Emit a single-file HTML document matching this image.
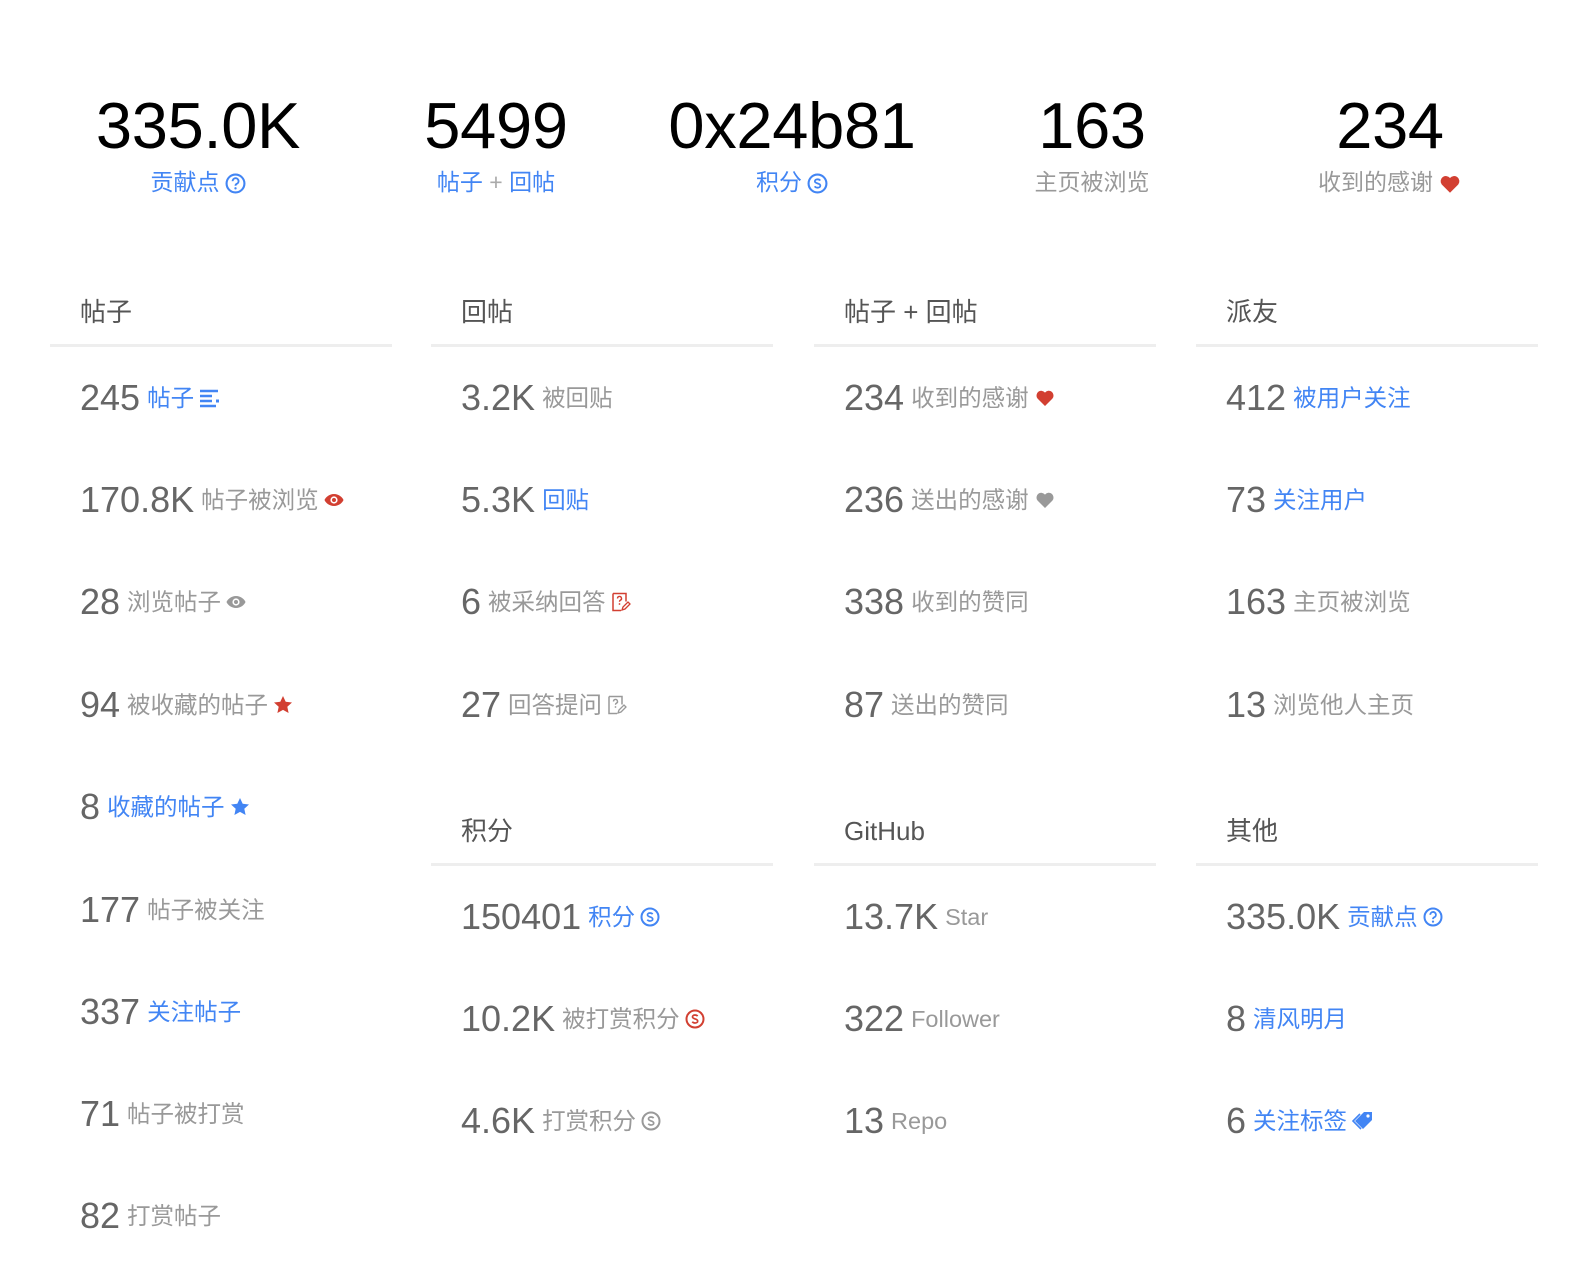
<!DOCTYPE html>
<html><head><meta charset="utf-8"><style>
body{margin:0;width:1594px;height:1288px;background:#fff;position:relative;overflow:hidden;font-family:"Liberation Sans","Noto Sans CJK SC",sans-serif}
.top{position:absolute;top:90px;width:298px;text-align:center}
.top .n{font-size:65px;color:#000;line-height:72px;letter-spacing:-0.3px}
.top .l{font-size:23px;line-height:36px;color:#999;margin-top:2px}
.b{color:#4285f4}.g{color:#999}.r{color:#d23f31}
.top .l.b{color:#4285f4}
.h{position:absolute;width:342px;height:40px;border-bottom:3px solid #eee;font-size:26px;color:#555;}
.h span{position:absolute;left:30px;top:-10px;line-height:36px}
.row{position:absolute;height:40px;line-height:40px;white-space:nowrap}
.row .n{font-size:36px;color:#666;vertical-align:middle}
.row .l{font-size:23.5px;color:#999;vertical-align:middle;margin-left:7px}
.row .l.b{color:#4285f4}
svg{vertical-align:middle;margin-left:5px}
</style></head><body>
<svg width="0" height="0" style="position:absolute">
<defs>
<symbol id="q" viewBox="0 0 20 20"><circle cx="10" cy="10" r="8.5" fill="none" stroke="currentColor" stroke-width="2"/><path d="M7.3 7.8a2.8 2.8 0 1 1 3.9 2.5c-.8.4-1.2.9-1.2 1.8" fill="none" stroke="currentColor" stroke-width="1.8"/><circle cx="10" cy="14.6" r="1.1" fill="currentColor"/></symbol>
<symbol id="s" viewBox="0 0 20 20"><circle cx="10" cy="10" r="8.5" fill="none" stroke="currentColor" stroke-width="2"/><path d="M12.6 7.2c-.5-.8-1.5-1.2-2.6-1.2-1.5 0-2.5.8-2.5 1.9 0 2.6 5.2 1.4 5.2 4.2 0 1.1-1.1 1.9-2.7 1.9-1.2 0-2.2-.5-2.7-1.3" fill="none" stroke="currentColor" stroke-width="1.7"/></symbol>
<symbol id="heart" viewBox="0 0 20 20"><path d="M10 18 2.5 10.5A4.6 4.6 0 0 1 10 4.6a4.6 4.6 0 0 1 7.5 5.9z" fill="currentColor"/></symbol>
<symbol id="eye" viewBox="0 0 20 14"><path d="M10 1C5 1 1.5 4.5 0.5 7c1 2.5 4.5 6 9.5 6s8.5-3.5 9.5-6C18.5 4.5 15 1 10 1z" fill="currentColor"/><circle cx="10" cy="7" r="3.6" fill="#fff"/><circle cx="10" cy="7" r="2" fill="currentColor"/></symbol>
<symbol id="star" viewBox="0 0 20 20"><path d="M10 1l2.7 5.8 6.3.7-4.7 4.3 1.3 6.2L10 14.9 4.4 18l1.3-6.2L1 7.5l6.3-.7z" fill="currentColor"/></symbol>
<symbol id="list" viewBox="0 0 22 20"><path d="M1 3h18M1 8h12M1 13h12M1 18h16" stroke="currentColor" stroke-width="2.4"/><rect x="17" y="11.5" width="3" height="3" fill="currentColor"/></symbol>
<symbol id="doc" viewBox="0 0 20 20"><path d="M2 1.5h13v8M2 1.5v17h8" fill="none" stroke="currentColor" stroke-width="1.5"/><path d="M6.5 6.5a2 2 0 1 1 2.8 1.8c-.6.3-.8.7-.8 1.4" fill="none" stroke="currentColor" stroke-width="1.4"/><circle cx="8.5" cy="12" r=".9" fill="currentColor"/><path d="M11 18l1-3 5-5 2 2-5 5z" fill="none" stroke="currentColor" stroke-width="1.3"/></symbol>
<symbol id="tag" viewBox="0 0 22 20"><path d="M12 1h8v8l-9 9-8-8z" fill="currentColor"/><circle cx="16" cy="5" r="1.6" fill="#fff"/><path d="M8 3 1 10l8 8" fill="none" stroke="currentColor" stroke-width="1.6"/></symbol>
</defs></svg>

<div class="top" style="left:49px"><div class="n">335.0K</div><div class="l b">贡献点<svg width="21" height="21" style="color:#4285f4"><use href="#q"/></svg></div></div>
<div class="top" style="left:347px"><div class="n">5499</div><div class="l"><span class="b">帖子</span> <span style="color:#aaa">+</span> <span class="b">回帖</span></div></div>
<div class="top" style="left:643px"><div class="n">0x24b81</div><div class="l b">积分<svg width="21" height="21" style="color:#4285f4"><use href="#s"/></svg></div></div>
<div class="top" style="left:943px"><div class="n">163</div><div class="l">主页被浏览</div></div>
<div class="top" style="left:1241px"><div class="n">234</div><div class="l">收到的感谢<svg width="24" height="22" style="color:#d23f31"><use href="#heart"/></svg></div></div>

<div class="h" style="left:50px;top:304px"><span>帖子</span></div>
<div class="h" style="left:431px;top:304px"><span>回帖</span></div>
<div class="h" style="left:814px;top:304px"><span>帖子 + 回帖</span></div>
<div class="h" style="left:1196px;top:304px"><span>派友</span></div>
<div class="h" style="left:431px;top:823px"><span>积分</span></div>
<div class="h" style="left:814px;top:823px"><span>GitHub</span></div>
<div class="h" style="left:1196px;top:823px"><span>其他</span></div>

<!-- col1 -->
<div class="row" style="left:80px;top:378px"><span class="n">245</span><span class="l b">帖子</span><svg width="22" height="20" style="color:#4285f4"><use href="#list"/></svg></div>
<div class="row" style="left:80px;top:480px"><span class="n">170.8K</span><span class="l">帖子被浏览</span><svg width="20" height="14" style="color:#d23f31"><use href="#eye"/></svg></div>
<div class="row" style="left:80px;top:582px"><span class="n">28</span><span class="l">浏览帖子</span><svg width="20" height="14" style="color:#999"><use href="#eye"/></svg></div>
<div class="row" style="left:80px;top:685px"><span class="n">94</span><span class="l">被收藏的帖子</span><svg width="20" height="20" style="color:#d23f31"><use href="#star"/></svg></div>
<div class="row" style="left:80px;top:787px"><span class="n">8</span><span class="l b">收藏的帖子</span><svg width="20" height="20" style="color:#4285f4"><use href="#star"/></svg></div>
<div class="row" style="left:80px;top:890px"><span class="n">177</span><span class="l">帖子被关注</span></div>
<div class="row" style="left:80px;top:992px"><span class="n">337</span><span class="l b">关注帖子</span></div>
<div class="row" style="left:80px;top:1094px"><span class="n">71</span><span class="l">帖子被打赏</span></div>
<div class="row" style="left:80px;top:1196px"><span class="n">82</span><span class="l">打赏帖子</span></div>
<!-- col2 -->
<div class="row" style="left:461px;top:378px"><span class="n">3.2K</span><span class="l">被回贴</span></div>
<div class="row" style="left:461px;top:480px"><span class="n">5.3K</span><span class="l b">回贴</span></div>
<div class="row" style="left:461px;top:582px"><span class="n">6</span><span class="l">被采纳回答</span><svg width="20" height="20" style="color:#d23f31"><use href="#doc"/></svg></div>
<div class="row" style="left:461px;top:685px"><span class="n">27</span><span class="l">回答提问</span><svg width="20" height="20" style="color:#999"><use href="#doc"/></svg></div>
<div class="row" style="left:461px;top:897px"><span class="n">150401</span><span class="l b">积分</span><svg width="20" height="20" style="color:#4285f4"><use href="#s"/></svg></div>
<div class="row" style="left:461px;top:999px"><span class="n">10.2K</span><span class="l">被打赏积分</span><svg width="20" height="20" style="color:#d23f31"><use href="#s"/></svg></div>
<div class="row" style="left:461px;top:1101px"><span class="n">4.6K</span><span class="l">打赏积分</span><svg width="20" height="20" style="color:#999"><use href="#s"/></svg></div>
<!-- col3 -->
<div class="row" style="left:844px;top:378px"><span class="n">234</span><span class="l">收到的感谢</span><svg width="22" height="20" style="color:#d23f31"><use href="#heart"/></svg></div>
<div class="row" style="left:844px;top:480px"><span class="n">236</span><span class="l">送出的感谢</span><svg width="22" height="20" style="color:#999"><use href="#heart"/></svg></div>
<div class="row" style="left:844px;top:582px"><span class="n">338</span><span class="l">收到的赞同</span></div>
<div class="row" style="left:844px;top:685px"><span class="n">87</span><span class="l">送出的赞同</span></div>
<div class="row" style="left:844px;top:897px"><span class="n">13.7K</span><span class="l">Star</span></div>
<div class="row" style="left:844px;top:999px"><span class="n">322</span><span class="l">Follower</span></div>
<div class="row" style="left:844px;top:1101px"><span class="n">13</span><span class="l">Repo</span></div>
<!-- col4 -->
<div class="row" style="left:1226px;top:378px"><span class="n">412</span><span class="l b">被用户关注</span></div>
<div class="row" style="left:1226px;top:480px"><span class="n">73</span><span class="l b">关注用户</span></div>
<div class="row" style="left:1226px;top:582px"><span class="n">163</span><span class="l">主页被浏览</span></div>
<div class="row" style="left:1226px;top:685px"><span class="n">13</span><span class="l">浏览他人主页</span></div>
<div class="row" style="left:1226px;top:897px"><span class="n">335.0K</span><span class="l b">贡献点</span><svg width="20" height="20" style="color:#4285f4"><use href="#q"/></svg></div>
<div class="row" style="left:1226px;top:999px"><span class="n">8</span><span class="l b">清风明月</span></div>
<div class="row" style="left:1226px;top:1101px"><span class="n">6</span><span class="l b">关注标签</span><svg width="22" height="20" style="color:#4285f4"><use href="#tag"/></svg></div>
</body></html>
